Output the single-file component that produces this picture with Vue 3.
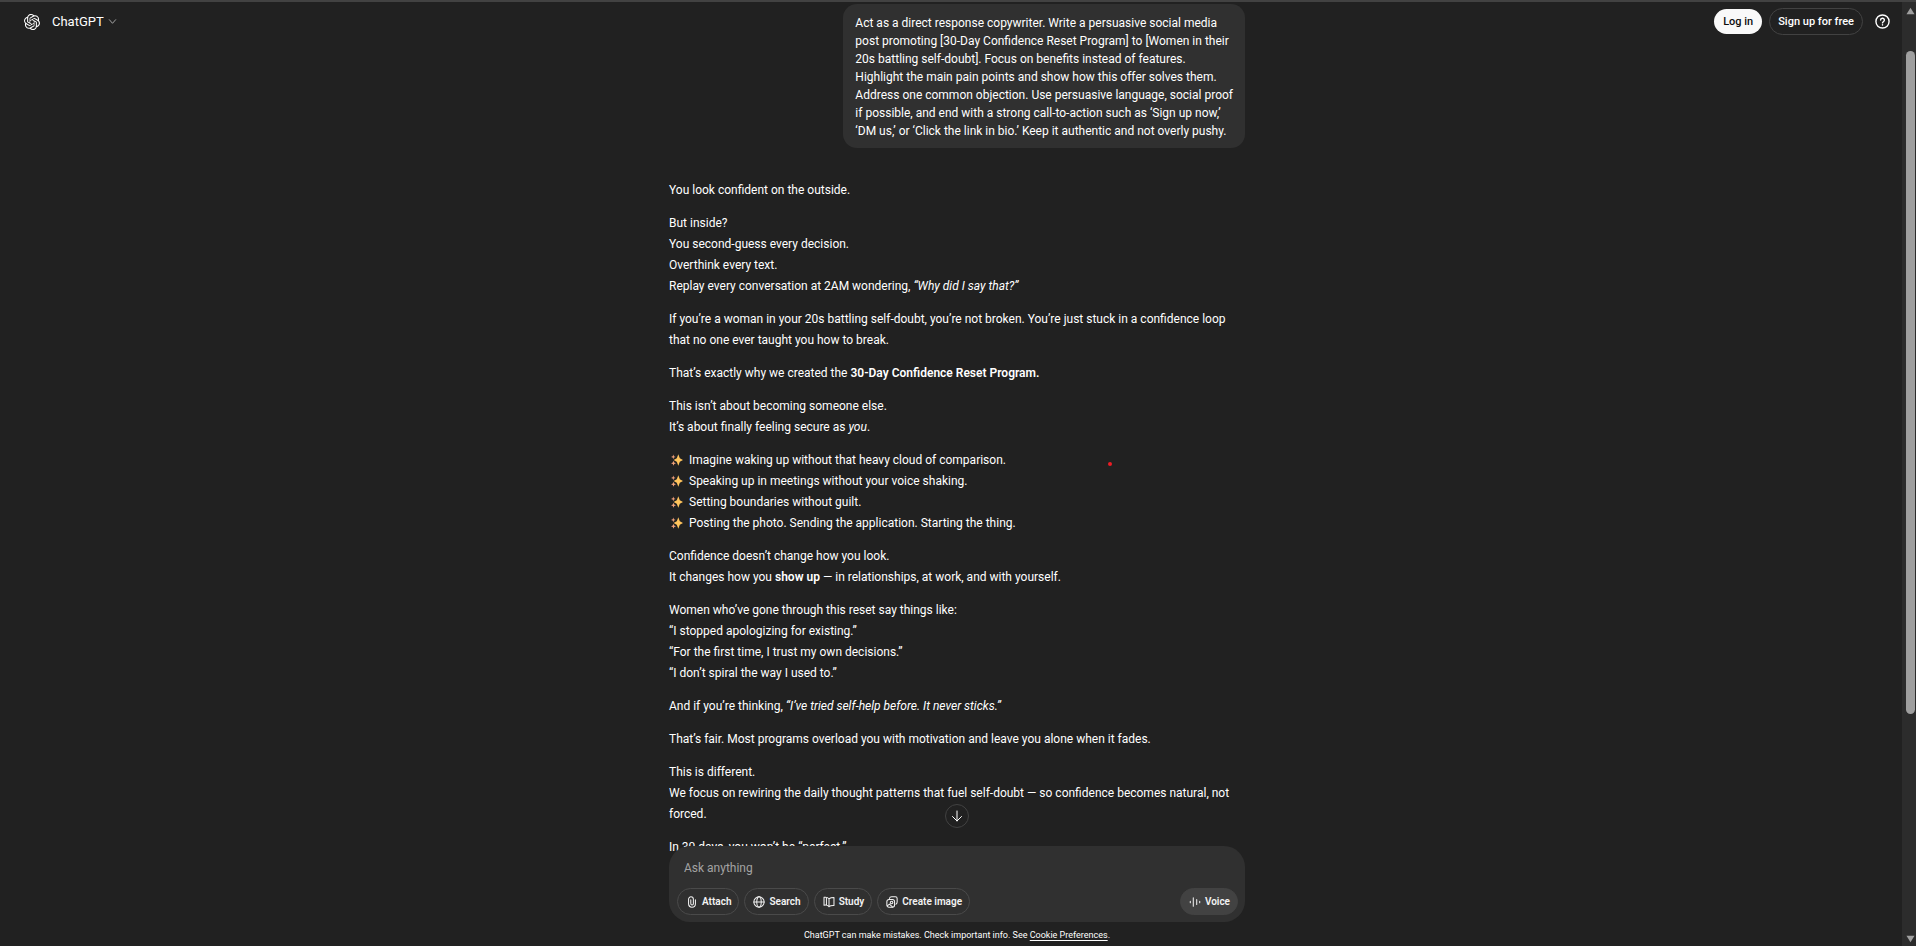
<script setup>
import { ref } from 'vue'

const message = ref('')

const prompt = [
  'Act as a direct response copywriter. Write a persuasive social media',
  'post promoting [30-Day Confidence Reset Program] to [Women in their',
  '20s battling self-doubt]. Focus on benefits instead of features.',
  'Highlight the main pain points and show how this offer solves them.',
  'Address one common objection. Use persuasive language, social proof',
  'if possible, and end with a strong call-to-action such as ‘Sign up now,’',
  '‘DM us,’ or ‘Click the link in bio.’ Keep it authentic and not overly pushy.'
]

const benefits = [
  'Imagine waking up without that heavy cloud of comparison.',
  'Speaking up in meetings without your voice shaking.',
  'Setting boundaries without guilt.',
  'Posting the photo. Sending the application. Starting the thing.'
]

const tools = ['Attach', 'Search', 'Study', 'Create image']
</script>

<template>
  <div class="page">
    <header class="topbar">
      <svg class="logo" viewBox="0 0 24 24" aria-hidden="true">
        <path d="M22.2819 9.8211a5.9847 5.9847 0 0 0-.5157-4.9108 6.0462 6.0462 0 0 0-6.5098-2.9A6.0651 6.0651 0 0 0 4.9807 4.1818a5.9847 5.9847 0 0 0-3.9977 2.9 6.0462 6.0462 0 0 0 .7427 7.0966 5.98 5.98 0 0 0 .511 4.9107 6.051 6.051 0 0 0 6.5146 2.9001A5.9847 5.9847 0 0 0 13.2599 24a6.0557 6.0557 0 0 0 5.7718-4.2058 5.9894 5.9894 0 0 0 3.9977-2.9001 6.0557 6.0557 0 0 0-.7475-7.0729zm-9.022 12.6081a4.4755 4.4755 0 0 1-2.8764-1.0408l.1419-.0804 4.7783-2.7582a.7948.7948 0 0 0 .3927-.6813v-6.7369l2.02 1.1686a.071.071 0 0 1 .038.052v5.5826a4.504 4.504 0 0 1-4.4945 4.4944zm-9.6607-4.1254a4.4708 4.4708 0 0 1-.5346-3.0137l.142.0852 4.783 2.7582a.7712.7712 0 0 0 .7806 0l5.8428-3.3685v2.3324a.0804.0804 0 0 1-.0332.0615L9.74 19.9502a4.4992 4.4992 0 0 1-6.1408-1.6464zM2.3408 7.8956a4.485 4.485 0 0 1 2.3655-1.9728V11.6a.7664.7664 0 0 0 .3879.6765l5.8144 3.3543-2.0201 1.1685a.0757.0757 0 0 1-.071 0l-4.8303-2.7865A4.504 4.504 0 0 1 2.3408 7.872zm16.5963 3.8558L13.1038 8.364 15.1192 7.2a.0757.0757 0 0 1 .071 0l4.8303 2.7913a4.4944 4.4944 0 0 1-.6765 8.1042v-5.6772a.79.79 0 0 0-.407-.667zm2.0107-3.0231l-.142-.0852-4.7735-2.7818a.7759.7759 0 0 0-.7854 0L9.409 9.2297V6.8974a.0662.0662 0 0 1 .0284-.0615l4.8303-2.7866a4.4992 4.4992 0 0 1 6.6802 4.66zM8.3065 12.863l-2.02-1.1638a.0804.0804 0 0 1-.038-.0567V6.0742a4.4992 4.4992 0 0 1 7.3757-3.4537l-.142.0805L8.704 5.459a.7948.7948 0 0 0-.3927.6813zm1.0976-2.3654l2.602-1.4998 2.6069 1.4998v2.9994l-2.5974 1.4997-2.6067-1.4997Z" />
      </svg>
      <button class="model" type="button">
        ChatGPT
        <svg viewBox="0 0 10 10" aria-hidden="true"><path d="M1.5 3 5 7l3.500-4" /></svg>
      </button>
      <div class="account">
        <button class="login" type="button">Log in</button>
        <button class="signup" type="button">Sign up for free</button>
        <button class="help" type="button" aria-label="Help">
          <svg viewBox="0 0 16 16" aria-hidden="true">
            <circle cx="8" cy="8" r="7" />
            <path d="M6 6.500a2 2 0 1 1 2.800 1.800Q8 8.700 8 9.500" />
            <path d="M8 11.300v.4" />
          </svg>
        </button>
      </div>
    </header>

    <main class="thread">
      <div class="column">
        <div class="bubble">
          <template v-for="line in prompt" :key="line">{{ line }}<br /></template>
        </div>

        <article class="answer">
          <p>You look confident on the outside.</p>
          <p>
            But inside?<br />
            You second-guess every decision.<br />
            Overthink every text.<br />
            Replay every conversation at 2AM wondering, <em>“Why did I say that?”</em>
          </p>
          <p>
            If you’re a woman in your 20s battling self-doubt, you’re not broken. You’re just stuck in a confidence loop<br />
            that no one ever taught you how to break.
          </p>
          <p>That’s exactly why we created the <strong>30-Day Confidence Reset Program.</strong></p>
          <p>
            This isn’t about becoming someone else.<br />
            It’s about finally feeling secure as <em>you</em>.
          </p>
          <ul class="benefits">
            <li v-for="item in benefits" :key="item">
              <svg viewBox="0 0 12 12" aria-hidden="true">
                <path fill="#ffc45c" d="M7.300.2 8.800 4.300 12 6 8.800 7.700 7.300 11.800 5.800 7.700 2.600 6 5.800 4.300z" />
                <path fill="#f2a27c" d="M2.300.5 2.900 2.200 4.600 2.900 2.900 3.600 2.300 5.300 1.700 3.600 0 2.900 1.700 2.200zM2.500 6.800 3.200 8.600 5 9.300 3.200 10 2.500 11.800 1.800 10 0 9.300 1.800 8.600z" />
              </svg>
              {{ item }}
            </li>
          </ul>
          <p>
            Confidence doesn’t change how you look.<br />
            It changes how you <strong>show up</strong> — in relationships, at work, and with yourself.
          </p>
          <p>
            Women who’ve gone through this reset say things like:<br />
            “I stopped apologizing for existing.”<br />
            “For the first time, I trust my own decisions.”<br />
            “I don’t spiral the way I used to.”
          </p>
          <p>And if you’re thinking, <em>“I’ve tried self-help before. It never sticks.”</em></p>
          <p>That’s fair. Most programs overload you with motivation and leave you alone when it fades.</p>
          <p>
            This is different.<br />
            We focus on rewiring the daily thought patterns that fuel self-doubt — so confidence becomes natural, not<br />
            forced.
          </p>
          <p>In 30 days, you won’t be “perfect.”</p>
        </article>
      </div>
    </main>

    <footer class="bottom">
      <button class="scroll-down" type="button" aria-label="Scroll to bottom">
        <svg viewBox="0 0 12 12" aria-hidden="true"><path d="M6 1v10M1.500 6.500 6 11l4.500-4.500" /></svg>
      </button>
      <form class="composer" @submit.prevent>
        <input v-model="message" type="text" placeholder="Ask anything" aria-label="Ask anything" />
        <div class="tools">
          <button v-for="tool in tools" :key="tool" class="chip" type="button">
            <svg viewBox="0 0 14 14" aria-hidden="true">
              <path v-if="tool === 'Attach'" d="M11 4.500v4.500a4 4 0 0 1-8 0V3.800a2.800 2.800 0 0 1 5.600 0V9a1.500 1.500 0 0 1-3 0V4.500" />
              <g v-else-if="tool === 'Search'">
                <circle cx="7" cy="7" r="6" />
                <ellipse cx="7" cy="7" rx="2.600" ry="6" />
                <path d="M1 7h12" />
              </g>
              <path v-else-if="tool === 'Study'" d="M7 3.200v9.300M7 3.200Q5 .8 1.200 1.500v9.300Q5 10 7 12.500M7 3.200q2-1.500 5.800-1.500v9.300Q9 10.700 7 12.500M4 1.800v8.700" />
              <g v-else>
                <rect x="1" y="4" width="9" height="9" rx="2.500" />
                <path d="M4 2.800Q4.500 1 6.500 1H11q2 0 2 2v4q0 2-1.500 2.500M1.500 11.500l2.500-2 3.500 3.300" />
                <circle cx="6.500" cy="7.500" r="1.500" />
              </g>
            </svg>
            {{ tool }}
          </button>
          <button class="chip voice" type="button">
            <svg viewBox="0 0 14 14" aria-hidden="true"><path d="M1.500 6v2M5 2v10M9 4v6M12.500 6v2" /></svg>
            Voice
          </button>
        </div>
      </form>
      <p class="notice">
        ChatGPT can make mistakes. Check important info. See <a href="#">Cookie Preferences</a>.
      </p>
    </footer>

    <div class="scrollbar" aria-hidden="true">
      <svg viewBox="0 0 10 8"><path d="M5 0.500 9.500 7.500h-9z" /></svg>
      <div class="track"><div class="thumb"></div></div>
      <svg viewBox="0 0 10 8"><path d="M5 7.500 9.500.5h-9z" /></svg>
    </div>

    <span class="pointer"></span>
  </div>
</template>

<style>
body {
  margin: 0;
  background: #212121;
}
</style>

<style scoped>
.page {
  position: relative;
  display: grid;
  grid-template-columns: minmax(0, 1fr) 14px;
  grid-template-rows: minmax(0, 1fr) auto;
  height: 100vh;
  box-sizing: border-box;
  border-top: 2px solid #424242;
  background: #212121;
  color: #fff;
  font-family: Roboto, "Noto Sans", sans-serif;
  font-size: 12px;
}

button,
input {
  font-family: inherit;
  color: inherit;
}

button {
  display: flex;
  align-items: center;
  justify-content: center;
  padding: 0;
  border: 0;
  background: none;
  cursor: pointer;
}

svg {
  flex: none;
  fill: none;
  stroke: currentColor;
  stroke-linecap: round;
  stroke-linejoin: round;
}

/* Top bar */
.topbar {
  position: absolute;
  top: 0;
  left: 0;
  right: 14px;
  display: flex;
  align-items: center;
  height: 39px;
  box-sizing: border-box;
  padding: 0 12px 0 24px;
}

.logo {
  width: 16px;
  height: 16px;
  fill: currentColor;
  stroke: none;
}

.model {
  gap: 4px;
  margin-left: 12px;
  font-size: 13px;
}

.model svg {
  width: 9px;
  height: 9px;
  color: #afafaf;
}

.account {
  display: flex;
  align-items: center;
  gap: 7px;
  margin-left: auto;
}

.login,
.signup {
  height: 25px;
  padding: 0 9px;
  border-radius: 14px;
  font-size: 11px;
  font-weight: 500;
}

.login {
  background: #f9f9f9;
  color: #0d0d0d;
}

.signup {
  height: 27px;
  padding: 0 8px;
  border: 1px solid #424242;
}

.help {
  margin-left: 5px;
}

.help svg {
  width: 15px;
  height: 15px;
  stroke-width: 1.5;
}

/* Conversation */
.thread {
  grid-column: 1;
  grid-row: 1;
  min-height: 0;
  padding-left: 12px;
}

.column {
  display: flex;
  flex-direction: column;
  max-width: 576px;
  margin: 0 auto;
  padding-top: 2px;
}

.bubble {
  align-self: flex-end;
  padding: 10px 12px 8px;
  border-radius: 14px;
  background: #303030;
  line-height: 18px;
  white-space: nowrap;
}

.answer {
  display: flex;
  flex-direction: column;
  gap: 12px;
  margin-top: 32px;
  line-height: 21px;
  white-space: nowrap;
}

.answer p,
.benefits {
  margin: 0;
  padding: 0;
}

.answer strong {
  font-weight: 600;
}

.benefits {
  list-style: none;
}

.benefits li {
  display: flex;
  align-items: center;
  gap: 6px;
  padding-left: 2px;
}

.benefits svg {
  width: 12px;
  height: 12px;
  margin-bottom: 2px;
  stroke: none;
}

/* Composer */
.bottom {
  position: relative;
  grid-column: 1;
  grid-row: 2;
  display: flex;
  flex-direction: column;
  align-items: center;
  padding-left: 12px;
  background: linear-gradient(transparent 22px, #212121 22px);
}

.scroll-down {
  position: absolute;
  top: -42px;
  width: 24px;
  height: 24px;
  border: 1px solid #424242;
  border-radius: 50%;
  background: #212121;
}

.scroll-down svg {
  width: 12px;
  height: 12px;
}

.composer {
  width: 100%;
  max-width: 576px;
  box-sizing: border-box;
  padding: 11px 7px 7px 8px;
  border-radius: 21px;
  background: #303030;
}

.composer input {
  display: block;
  width: 100%;
  height: 22px;
  box-sizing: border-box;
  padding: 0 7px;
  border: 0;
  outline: 0;
  background: none;
  font-size: 12px;
}

.composer input::placeholder {
  color: #a3a3a3;
  opacity: 1;
}

.tools {
  display: flex;
  gap: 5px;
  margin-top: 9px;
}

.chip {
  gap: 4px;
  height: 27px;
  padding: 0 7px 0 8px;
  border: 1px solid #4a4a4a;
  border-radius: 14px;
  color: #f3f3f3;
  font-size: 10px;
  font-weight: 600;
}

.chip svg {
  width: 12px;
  height: 12px;
  stroke-width: 1.2;
}

.voice {
  margin-left: auto;
  border-color: #424242;
  background: #424242;
}

.notice {
  margin: 0;
  padding-top: 2px;
  font-size: 9px;
  line-height: 22px;
}

.notice a {
  color: inherit;
  text-underline-offset: 2px;
}

/* Scrollbar */
.scrollbar {
  grid-column: 2;
  grid-row: 1 / 3;
  display: flex;
  flex-direction: column;
  align-items: center;
  padding: 5px 0 3px 2px;
  background: #2c2c2c;
  color: #9f9f9f;
}

.scrollbar svg {
  width: 9px;
  height: 8px;
  fill: currentColor;
  stroke: none;
}

.track {
  flex: 1;
  width: 9px;
  padding-top: 36px;
}

.thumb {
  height: 75%;
  border-radius: 5px;
  background: #9f9f9f;
}

/* Red marker dot over the thread */
.pointer {
  position: absolute;
  top: 48.7%;
  left: 58%;
  width: 4px;
  height: 4px;
  margin-left: -3px;
  border-radius: 50%;
  background: #ed1c24;
}
</style>
